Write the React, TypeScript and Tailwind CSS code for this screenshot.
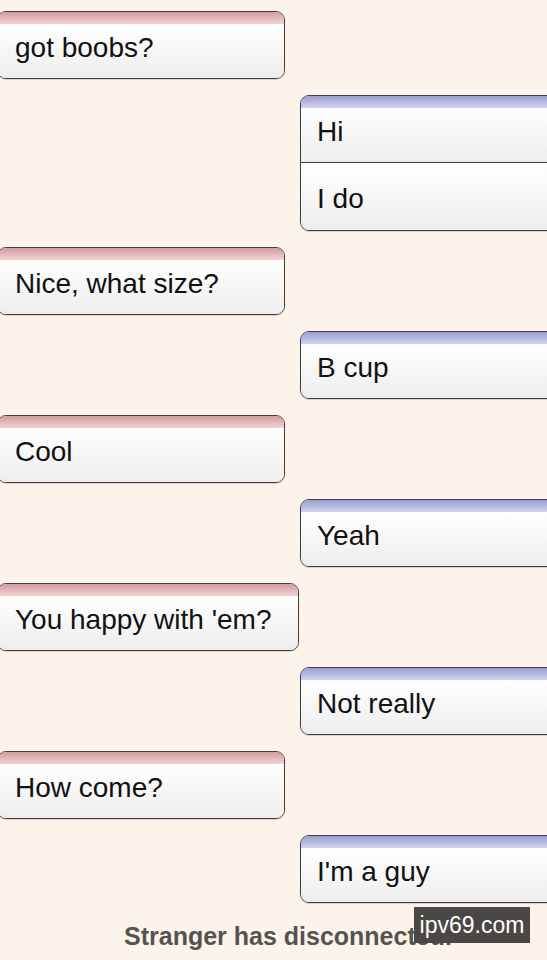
import React from "react";

const font = { fontFamily: '"Liberation Sans", Arial, sans-serif' };

function Left({ text, wide }: { text: string; wide?: boolean }) {
  return (
    <div
      className={`-ml-[3px] ${wide ? "w-[302px]" : "w-[288px]"} h-[68px] shrink-0 rounded-[9px] border-[1.5px] border-[#4d3a3a] overflow-hidden flex flex-col shadow-[0_1px_1px_rgba(0,0,0,0.15)]`}
    >
      <div className="h-[12px] shrink-0 bg-gradient-to-b from-[#d39ba0] to-[#f1d3d4]" />
      <div className="flex-1 bg-gradient-to-b from-white to-[#ededed] pl-[17px] pt-[8px]">
        <span className="text-[28px] leading-[32px] text-[#111]">{text}</span>
      </div>
    </div>
  );
}

function Right({ lines }: { lines: string[] }) {
  return (
    <div
      className={`ml-[300px] w-[270px] ${lines.length > 1 ? "h-[136px]" : "h-[68px]"} shrink-0 rounded-[9px] border-[1.5px] border-[#3d3d48] overflow-hidden flex flex-col shadow-[0_1px_1px_rgba(0,0,0,0.15)]`}
    >
      <div className="h-[12px] shrink-0 bg-gradient-to-b from-[#9c9cd0] to-[#d3d3ee]" />
      {lines.map((l, i) => (
        <div
          key={i}
          className={`bg-gradient-to-b from-white to-[#ededed] pl-[16px] ${
            i === 0 ? "flex-1 pt-[8px]" : "h-[68px] shrink-0 pt-[20px] border-t-[1.5px] border-[#3d3d48]"
          }`}
        >
          <span className="text-[28px] leading-[32px] text-[#111]">{l}</span>
        </div>
      ))}
    </div>
  );
}

export default function App() {
  return (
    <div
      className="w-[547px] h-[960px] overflow-hidden bg-[#fcf4eb] relative"
      style={font}
    >
      <div className="flex flex-col gap-[16px] pt-[11px]">
        <Left text="got boobs?" />
        <Right lines={["Hi", "I do"]} />
        <Left text="Nice, what size?" />
        <Right lines={["B cup"]} />
        <Left text="Cool" />
        <Right lines={["Yeah"]} />
        <Left text="You happy with 'em?" wide />
        <Right lines={["Not really"]} />
        <Left text="How come?" />
        <Right lines={["I'm a guy"]} />
        <div className="pl-[124px] mt-[3px] text-[25px] leading-[28px] font-bold text-[#555350]">
          Stranger has disconnected.
        </div>
      </div>
      <div className="absolute left-[414px] top-[907px] w-[116px] h-[36px] bg-[#4a4744] text-white text-[23px] leading-[36px] text-center">
        ipv69.com
      </div>
    </div>
  );
}
